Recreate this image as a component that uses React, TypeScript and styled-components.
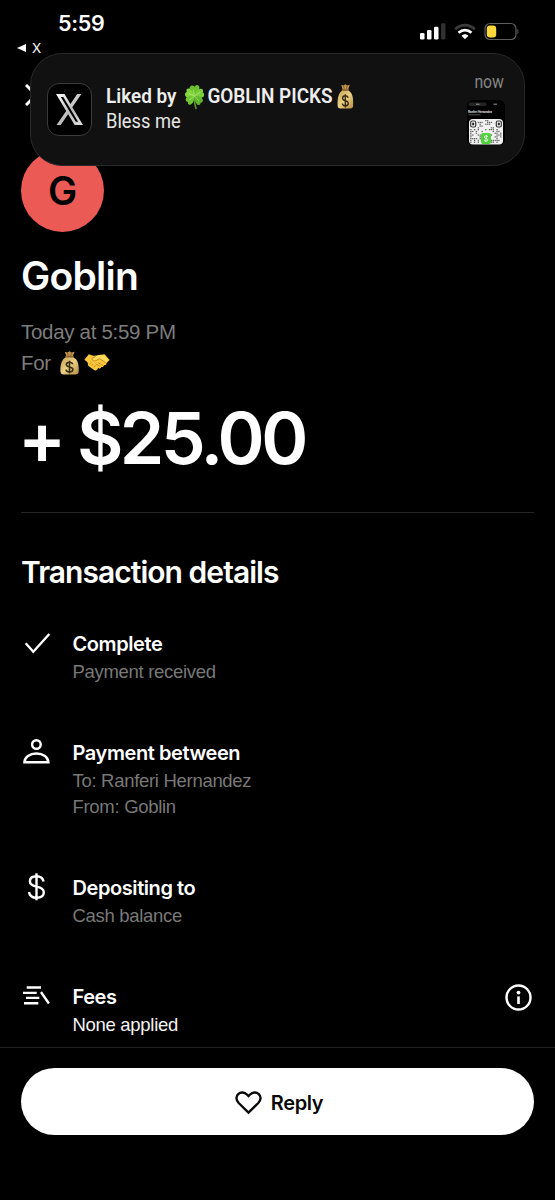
import React from "react";
import styled, { createGlobalStyle } from "styled-components";

const GlobalStyle = createGlobalStyle`
  * { box-sizing: border-box; }
  body { margin: 0; background: #000; }
`;

const Screen = styled.main`
  position: relative;
  display: flex;
  flex-direction: column;
  width: 555px;
  height: 1200px;
  overflow: hidden;
  background: #000;
  color: #fff;
  font-family: Inter, "Liberation Sans", sans-serif;
`;

const StatusBar = styled.header`
  display: flex;
  justify-content: space-between;
  height: 60px;
  padding: 10px 36px 0 17px;
`;

const StatusLeft = styled.div`
  display: flex;
  flex-direction: column;
`;

const Clock = styled.span`
  margin-left: 41px;
  font-size: 21.5px;
  font-weight: 600;
  line-height: 26px;
  letter-spacing: -0.3px;
`;

const BackToApp = styled.span`
  display: flex;
  align-items: center;
  gap: 6px;
  height: 24px;
  font-size: 13.5px;
  line-height: 24px;
`;

const StatusIcons = styled.div`
  display: flex;
  gap: 8px;
  padding-top: 12px;
`;

const Content = styled.section`
  display: flex;
  flex-direction: column;
  flex: 1;
  min-height: 0;
  padding: 0 21px;
`;

const NavRow = styled.div`
  display: flex;
  align-items: center;
  height: 89px;
  padding: 0 0 20px 4px;
`;

const Avatar = styled.div`
  width: 83px;
  height: 83px;
  flex: none;
  border-radius: 50%;
  background: #ec5a55;
  color: #000;
  font-size: 39px;
  font-weight: 600;
  line-height: 83px;
  text-align: center;
`;

const Name = styled.h1`
  margin: 19px 0 0;
  font-size: 39px;
  font-weight: 600;
  line-height: 49px;
  letter-spacing: -0.75px;
`;

const Meta = styled.div`
  display: flex;
  flex-direction: column;
  margin-top: 16px;
  color: #7d7d7d;
  font-family: "Liberation Sans", Arial, sans-serif;
  font-size: 20.5px;
  line-height: 31px;
  letter-spacing: -0.3px;
`;

const MetaLine = styled.div`
  display: flex;
  align-items: center;
  height: 31px;
`;

const Amount = styled.div`
  margin: 20px 0 0 -3px;
  font-size: 71.5px;
  font-weight: 600;
  line-height: 80px;
  letter-spacing: -3.6px;
  white-space: nowrap;
`;

const Divider = styled.hr`
  width: 100%;
  height: 1px;
  flex: none;
  margin: 34px 0 0;
  border: 0;
  background: #262626;
`;

const SectionTitle = styled.h2`
  margin: 40px 0 0;
  font-size: 30px;
  font-weight: 600;
  line-height: 38px;
  letter-spacing: -0.96px;
`;

const Details = styled.div`
  display: flex;
  flex-direction: column;
  gap: 55.5px;
  margin-top: 40px;
`;

const DetailRow = styled.div`
  display: flex;
  align-items: flex-start;
`;

const DetailIcon = styled.svg`
  width: 30px;
  height: 30px;
  flex: none;
  margin: -2px 21.5px -10px 0;
  fill: none;
  stroke: #fff;
  stroke-width: 2.4;
  overflow: visible;
`;

const DetailText = styled.div`
  flex: 1;
`;

const DetailLabel = styled.div`
  margin-bottom: 1.5px;
  font-size: 20px;
  font-weight: 600;
  line-height: 26px;
  letter-spacing: -0.42px;
`;

const DetailNote = styled.div<{ $bright?: boolean }>`
  color: ${(p) => (p.$bright ? "#f4f4f4" : "#787878")};
  font-family: "Liberation Sans", Arial, sans-serif;
  font-size: 18.5px;
  line-height: 26px;
  letter-spacing: -0.3px;
`;

const InfoIcon = styled.svg`
  width: 27px;
  height: 27px;
  margin: 0 2px 0 0;
`;

const Footer = styled.footer`
  height: 153px;
  flex: none;
  padding: 20px 21px 0;
  border-top: 1px solid #1f1f1f;
  background: #000;
`;

const ReplyButton = styled.button`
  display: flex;
  align-items: center;
  justify-content: center;
  gap: 9px;
  width: 100%;
  height: 67px;
  padding: 2px 0 0 3px;
  border: 0;
  border-radius: 34px;
  background: #fff;
  color: #0a0a0a;
  font: 600 20px/26px Inter, "Liberation Sans", sans-serif;
  letter-spacing: -0.4px;
`;

const Notification = styled.aside`
  position: absolute;
  top: 53px;
  left: 30px;
  display: flex;
  width: 495px;
  height: 113px;
  padding: 0 19px 0 16px;
  border: 1px solid #292929;
  border-radius: 32px;
  background: #111;
  font-family: Roboto, "Liberation Sans", sans-serif;
`;

const AppIcon = styled.div`
  display: flex;
  align-items: center;
  justify-content: center;
  width: 45px;
  height: 53px;
  flex: none;
  margin-top: 29px;
  border: 1px solid #3b3b3b;
  border-radius: 12px;
  background: #000;
`;

const NotificationBody = styled.div`
  flex: 1;
  margin: 30px 0 0 14px;
  color: #e6e6e6;
  font-size: 20.8px;
  line-height: 25px;
  white-space: nowrap;
`;

const NotificationTitle = styled.div`
  display: flex;
  align-items: center;
  height: 25px;
  color: #ededed;
  font-weight: 600;
  transform: scaleX(0.91);
  transform-origin: left center;
`;

const NotificationMessage = styled.div`
  height: 25px;
  transform: scaleX(0.88);
  transform-origin: left center;
`;

const NotificationSide = styled.div`
  display: flex;
  flex-direction: column;
  align-items: flex-end;
  gap: 6px;
  padding-top: 16px;
`;

const TimeLabel = styled.span`
  margin-right: 1px;
  color: #858585;
  font-size: 18.8px;
  line-height: 24px;
  letter-spacing: -0.2px;
  transform: scaleX(0.84);
  transform-origin: right center;
`;

const Glyph = styled.svg<{ $ml?: number; $mr?: number }>`
  flex: none;
  margin-left: ${(p) => p.$ml ?? 0}px;
  margin-right: ${(p) => p.$mr ?? 0}px;
`;

function MoneyBag({ width, height, ml, mr }: { width: number; height: number; ml?: number; mr?: number }) {
  return (
    <Glyph $ml={ml} $mr={mr} width={width} height={height} viewBox="0 0 18 24" preserveAspectRatio="none" role="img" aria-label="money bag">
      <defs>
        <linearGradient id="bag" x1="0" x2="1" y1="0" y2="1">
          <stop offset="0" stopColor="#c8a052" />
          <stop offset=".5" stopColor="#ead083" />
          <stop offset="1" stopColor="#b58c41" />
        </linearGradient>
      </defs>
      <path d="M4.500.8 7 1.500 9 .3l2 1.200 2.900-.7-2 5H6.200z" fill="#c0924b" />
      <path d="M7 1.500 8 5M11 1.500 10.200 5" stroke="#765320" strokeWidth=".7" />
      <path d="M5.800 6h6.600c1.800 1.200 3 2.300 3.900 4 1.200 2.500 1.700 6.700 1.400 10.500-.2 2.200-1.200 3-3.200 3H3.500c-2 0-3-.9-3.100-3C.2 16.700.7 12.500 2 10c.9-1.700 2.100-2.900 3.800-4z" fill="url(#bag)" />
      <path d="M5.500 5.800h7" stroke="#8a642b" strokeWidth="1.400" strokeLinecap="round" />
      <path d="M12 13.300c-.3-1.400-1.400-2-3-2-1.900 0-3 .9-3 2.300 0 1.500 1.200 2 3 2.400 2 .4 3.200 1 3.200 2.500S11 21 9 21c-1.900 0-3.100-.8-3.300-2.300M9 9.800v12.700" fill="none" stroke="#382c13" strokeWidth="1.500" />
    </Glyph>
  );
}

function Clover() {
  return (
    <Glyph $ml={8.5} $mr={3} width="22.500" height="26" viewBox="0 0 22 26" preserveAspectRatio="none" role="img" aria-label="four leaf clover">
      <path d="M11 12c-.3 5 .2 9 1.700 13" stroke="#579d24" strokeWidth="1.800" fill="none" />
      <path d="M11 12C7 10 4.500 6 6 3c1-2 3.500-2.200 5-.2C13-.1 16.300.8 16.300 4c0 3-2.300 6-5.300 8z" fill="#6cbf2f" />
      <path d="M11 12C7 14.500 2.500 14.500 1.200 12 0 9.800 1.400 8.500 2.600 8 1.600 5.500 3.400 3.800 6 5c2.400 1.200 4 4 5 7z" fill="#85d53d" />
      <path d="M11 12c1.300-4 3.500-6.800 6.400-7.300 2.600-.4 3.500 1.700 2.500 3.700 2 .8 2.300 3.200.4 4.600C18 14.700 14.300 14 11 12z" fill="#7bcd3a" />
      <path d="M11 12c0 4-1.600 7.500-4 8.500-2.200.8-3.500-.9-3-2.600-2.500-.2-3.300-2.800-1.500-4.500C4.500 11.700 8 11.500 11 12z" fill="#70c533" />
      <path d="M11 12c4-.4 7.700.6 8.800 3.200.9 2.100-.5 3.700-2.300 3.600.1 2-2 3-3.700 1.600C11.700 18.600 11 15.500 11 12z" fill="#5fb52b" />
      <path d="m11 12-1.200-6M11 12 4.500 9.500M11 12l6-3.700M11 12l-5.500 4M11 12l5 5" stroke="#b9ec7c" strokeWidth=".7" />
    </Glyph>
  );
}

function Handshake() {
  return (
    <Glyph $ml={5} width="26" height="17" viewBox="0 0 26 17" role="img" aria-label="handshake">
      <path d="M.4 5.800 4.800.3l4.500 1.500h3l3-.8 5.300-.7 5 5.800-3.100 3.200c.2 1.500-1 2.200-2.500 2-.2 1.600-1.500 2-2.800 1.600-.6 1.500-1.700 1.800-3 1.200-1 2.300-2.600 3-4.500 1.700l-5.500-4L3.500 8.300z" fill="#fbc93b" />
      <path d="m8 4.500 3.800-2.700 4-.6 5 .3 3.500 4.500-2.500 2-6-3.300-4.200 2.200C9 7.800 7.400 6.300 8 4.500z" fill="#ffd95c" />
      <path d="m8 4.500 3.800-2.400M8 4.500c-.3 2.300 1.600 3 3.700 2.200l4-2 6 4M14 8.500l5 3M11.500 9.700l4.700 3M5.500 10l2-1.500M7.500 11.800l2-2M10 13.300l1.500-2" fill="none" stroke="#b9791b" strokeWidth=".8" />
    </Glyph>
  );
}

const qrCells: Array<[number, number]> = [];
for (let row = 0; row < 13; row++) {
  for (let col = 0; col < 17; col++) {
    const inFinder = row < 5 && (col < 4 || col > 12);
    const inBadge = row > 6 && col > 5 && col < 11;
    if (!inFinder && !inBadge && (row * 7 + col * 11 + row * col * 3 + ((col * col) % 5)) % 7 < 3) {
      qrCells.push([col, row]);
    }
  }
}

function Thumbnail() {
  return (
    <Glyph width="38" height="45" viewBox="0 0 38 45">
      <rect width="38" height="45" rx="6" fill="#000" />
      <rect x="1.500" y="2.500" width="18" height="3.500" rx="1.700" fill="#242424" />
      <path d="M9 4.200h3.500M26.500 4.200H30" stroke="#999" strokeWidth="1" />
      <text x="1" y="12.800" fill="#ddd" fontSize="3.100" fontWeight="700" textLength="24">Ranferi Hernandez</text>
      <path d="M1.500 14.800h12" stroke="#777" strokeWidth=".7" />
      <rect x="2" y="19" width="34" height="25.500" rx="4" fill="#f1f1f1" />
      {qrCells.map(([c, r]) => (
        <rect key={`${c}-${r}`} x={3.2 + c * 1.87} y={20 + r * 1.8} width="1.300" height="1.300" fill="#666" />
      ))}
      {[6.2, 31.8].map((x) => (
        <g key={x}>
          <rect x={x - 2.5} y="21" width="5" height="6" rx="1.500" fill="#fff" stroke="#333" strokeWidth="1.200" />
          <rect x={x - 1} y="22.700" width="2" height="2.600" fill="#222" />
        </g>
      ))}
      <rect x="14" y="33" width="10" height="11" rx="2" fill="#4fd43e" />
      <path d="M20.900 36.600c-1-1-3.600-1-3.600.5 0 1.700 3.500.8 3.500 2.700 0 1.600-2.600 1.700-3.800.5M19.700 34.900l-1 7" fill="none" stroke="#fff" strokeWidth=".8" />
    </Glyph>
  );
}

export default function App() {
  return (
    <>
      <GlobalStyle />
      <Screen>
        <StatusBar>
          <StatusLeft>
            <Clock>5:59</Clock>
            <BackToApp>
              <svg width="9" height="8" viewBox="0 0 9 8"><path d="M9 0v8L0 4z" fill="#fff" /></svg>
              X
            </BackToApp>
          </StatusLeft>
          <StatusIcons>
            <svg width="26" height="18" viewBox="0 0 26 18">
              <rect x="0" y="11" width="4.500" height="6.500" rx="1.300" fill="#fff" />
              <rect x="7" y="8" width="4.500" height="9.500" rx="1.300" fill="#fff" />
              <rect x="14" y="4.700" width="4.500" height="12.800" rx="1.300" fill="#fff" />
              <rect x="21" y="1.300" width="4.500" height="16.200" rx="1.300" fill="#303030" />
            </svg>
            <svg width="22" height="18" viewBox="0 0 22 18" fill="none" strokeWidth="2.800">
              <path d="M1.200 7.200c5.600-5.500 14-5.500 19.600 0" stroke="#3b3b3b" />
              <path d="M4.600 10.800c3.700-3.600 9.100-3.600 12.800 0" stroke="#fff" />
              <path d="M7.600 13.700c2-2 4.800-2 6.800 0L11 17.300z" fill="#fff" />
            </svg>
            <svg width="35" height="18" viewBox="0 0 35 18">
              <rect x="1" y="1.500" width="31" height="16" rx="5" fill="none" stroke="#5e5e5e" strokeWidth="1.200" />
              <rect x="2.800" y="3.500" width="9.400" height="12" rx="3.200" fill="#fbd63d" />
              <path d="M33.500 7v5c1.200-.6 1.200-4.400 0-5z" fill="#707070" />
            </svg>
          </StatusIcons>
        </StatusBar>

        <Content>
          <NavRow>
            <svg width="22" height="22" viewBox="0 0 22 22"><path d="m1 1 20 20M21 1 1 21" stroke="#fff" strokeWidth="3" /></svg>
          </NavRow>
          <Avatar>G</Avatar>
          <Name>Goblin</Name>
          <Meta>
            <MetaLine>Today at 5:59 PM</MetaLine>
            <MetaLine>
              For
              <MoneyBag width={19} height={24} ml={9} />
              <Handshake />
            </MetaLine>
          </Meta>
          <Amount>+ $25.00</Amount>
          <Divider />
          <SectionTitle>Transaction details</SectionTitle>
          <Details>
            <DetailRow>
              <DetailIcon viewBox="0 0 30 30"><path d="m4.700 14.300 7.600 8.500L28.300 5" /></DetailIcon>
              <DetailText>
                <DetailLabel>Complete</DetailLabel>
                <DetailNote>Payment received</DetailNote>
              </DetailText>
            </DetailRow>
            <DetailRow>
              <DetailIcon viewBox="0 0 30 30">
                <circle cx="15.400" cy="6.500" r="4.300" />
                <path d="M3.400 24.300c.2-5 5.200-8.800 12-8.800s11.800 3.800 12 8.800z" />
              </DetailIcon>
              <DetailText>
                <DetailLabel>Payment between</DetailLabel>
                <DetailNote>To: Ranferi Hernandez</DetailNote>
                <DetailNote>From: Goblin</DetailNote>
              </DetailText>
            </DetailRow>
            <DetailRow>
              <DetailIcon viewBox="0 0 30 30">
                <path d="M22.600 8.500C21.800 5 19.300 3.200 15.500 3.200c-4 0-6.600 1.900-6.600 5.100 0 3.600 2.900 4.600 6.600 5.400 4.200.9 7.300 1.900 7.300 5.600 0 3.500-2.900 5.500-7.200 5.500-4.400 0-7.100-2.100-7.600-5.800M15.500.3v27" />
              </DetailIcon>
              <DetailText>
                <DetailLabel>Depositing to</DetailLabel>
                <DetailNote>Cash balance</DetailNote>
              </DetailText>
            </DetailRow>
            <DetailRow>
              <DetailIcon viewBox="0 0 30 30">
                <path d="M5.700 5.500H20M2 10.900h13.700M5 15.900h13.300M3 21.200h14.300M20 10l7.900 11.500" />
              </DetailIcon>
              <DetailText>
                <DetailLabel>Fees</DetailLabel>
                <DetailNote $bright>None applied</DetailNote>
              </DetailText>
              <InfoIcon viewBox="0 0 27 27">
                <circle cx="13.500" cy="13.500" r="12" fill="none" stroke="#fff" strokeWidth="2.400" />
                <circle cx="13.500" cy="8.600" r="1.900" fill="#fff" />
                <path d="M13.500 12.400v7.600" stroke="#fff" strokeWidth="2.600" />
              </InfoIcon>
            </DetailRow>
          </Details>
        </Content>

        <Footer>
          <ReplyButton>
            <svg width="27" height="24" viewBox="0 0 27 24">
              <path d="M13.500 21.600 3.700 12C.8 9 .8 5.300 3.200 3.100c2.500-2.300 6.300-2 8.700.4l1.600 1.600 1.600-1.600c2.400-2.400 6.200-2.700 8.700-.4 2.400 2.200 2.400 5.900-.5 8.900z" fill="none" stroke="#0a0a0a" strokeWidth="2.400" />
            </svg>
            Reply
          </ReplyButton>
        </Footer>

        <Notification>
          <AppIcon>
            <svg width="27" height="31" viewBox="1.250 2.250 21.600 19.500" preserveAspectRatio="none">
              <defs>
                <linearGradient id="silver" x1="0" x2="1" y1="0" y2="1">
                  <stop offset="0" stopColor="#fff" />
                  <stop offset=".55" stopColor="#bbb" />
                  <stop offset="1" stopColor="#e2e2e2" />
                </linearGradient>
              </defs>
              <path fill="url(#silver)" d="M18.244 2.250h3.308l-7.227 8.260 8.502 11.240H16.170l-5.214-6.817L4.990 21.750H1.680l7.730-8.835L1.254 2.250H8.080l4.713 6.231zm-1.161 17.520h1.833L7.084 4.126H5.117z" />
            </svg>
          </AppIcon>
          <NotificationBody>
            <NotificationTitle>
              Liked by
              <Clover />
              GOBLIN PICKS
              <MoneyBag width={18} height={25} ml={4.5} />
            </NotificationTitle>
            <NotificationMessage>Bless me</NotificationMessage>
          </NotificationBody>
          <NotificationSide>
            <TimeLabel>now</TimeLabel>
            <Thumbnail />
          </NotificationSide>
        </Notification>
      </Screen>
    </>
  );
}
